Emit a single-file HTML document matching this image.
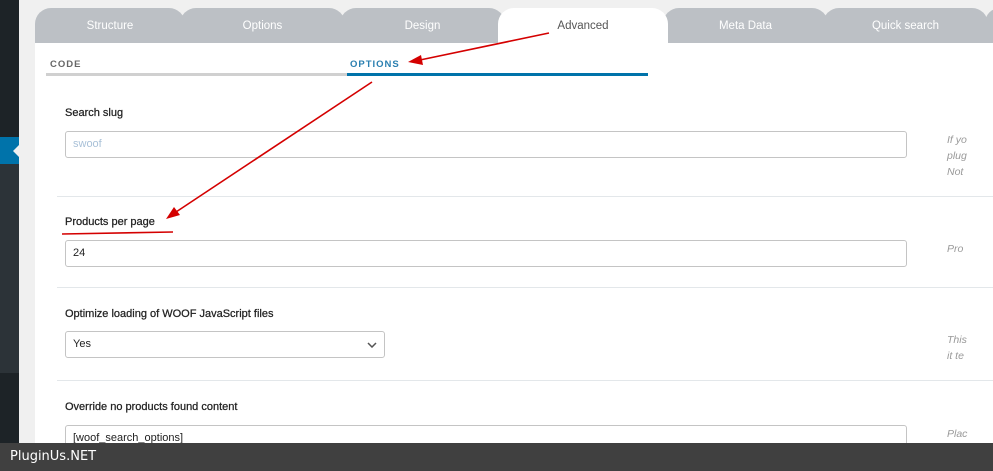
<!DOCTYPE html><html><head><style>
body{margin:0;width:993px;height:471px;overflow:hidden;background:#f0f0f0;font-family:"Liberation Sans",sans-serif;position:relative}
.a{position:absolute}
.lab{position:absolute;left:65px;font-size:11px;color:#222;letter-spacing:0px;-webkit-text-stroke:0.25px #222}
.inp{position:absolute;left:65px;width:833px;height:25px;border:1px solid #c4c4c4;border-radius:3px;background:#fff;font-size:11px;line-height:25px;padding-left:7px;box-sizing:content-box;color:#222}
.hr{position:absolute;left:57px;width:936px;height:1px;background:#e3e7ea}
.d{position:absolute;left:947px;font-size:10.5px;font-style:italic;color:#999;line-height:16px}
.tab{position:absolute;top:8px;height:35px;background:#bcc0c5;color:#fff;font-size:11.5px;text-align:center;line-height:36px;border-radius:16px 16px 0 0}
</style></head><body>
<div class="a" style="left:0;top:0;width:19px;height:137px;background:#1d2327"></div>
<div class="a" style="left:0;top:137px;width:19px;height:27px;background:#0073aa"></div>
<div class="a" style="left:13px;top:145px;width:0;height:0;border-top:6px solid transparent;border-bottom:6px solid transparent;border-right:6px solid #f0f0f0"></div>
<div class="a" style="left:0;top:164px;width:19px;height:209px;background:#2c3338"></div>
<div class="a" style="left:0;top:373px;width:19px;height:98px;background:#1d2327"></div>
<div class="a" style="left:35px;top:43px;width:958px;height:428px;background:#fff"></div>
<div class="tab" style="left:35px;width:150px">Structure</div>
<div class="tab" style="left:180px;width:165px">Options</div>
<div class="tab" style="left:340px;width:165px">Design</div>
<div class="tab" style="left:663px;width:165px">Meta Data</div>
<div class="tab" style="left:823px;width:165px">Quick search</div>
<div class="tab" style="left:985px;width:30px"></div>
<div class="tab" style="left:498px;width:170px;background:#fff;color:#555">Advanced</div>
<div class="a" style="left:50px;top:59px;font-size:9.5px;font-weight:bold;letter-spacing:1px;color:#666">CODE</div>
<div class="a" style="left:350px;top:59px;font-size:9.5px;font-weight:bold;letter-spacing:1px;color:#2a7fb0">OPTIONS</div>
<div class="a" style="left:46px;top:73px;width:301px;height:3px;background:#d0d0d0"></div>
<div class="a" style="left:347px;top:73px;width:301px;height:3px;background:#0073aa"></div>
<div class="lab" style="top:107px">Search slug</div>
<div class="inp" style="top:131px;color:#a9c1d8">swoof</div>
<div class="d" style="top:132px">If yo<br>plug<br>Not</div>
<div class="hr" style="top:196px"></div>
<div class="lab" style="top:216px">Products per page</div>
<div class="inp" style="top:240px">24</div>
<div class="d" style="top:241px">Pro</div>
<div class="hr" style="top:287px"></div>
<div class="lab" style="top:308px">Optimize loading of WOOF JavaScript files</div>
<div class="inp" style="top:331px;width:311px">Yes<svg style="position:absolute;right:7px;top:10px" width="10" height="6"><path d="M1 1L5 5L9 1" stroke="#555" stroke-width="1.5" fill="none"/></svg></div>
<div class="d" style="top:332px">This<br>it te</div>
<div class="hr" style="top:380px"></div>
<div class="lab" style="top:401px">Override no products found content</div>
<div class="inp" style="top:425px">[woof_search_options]</div>
<div class="d" style="top:426px">Plac</div>
<svg class="a" style="left:0;top:0" width="993" height="471">
<g stroke="#d40000" stroke-width="1.6" fill="#d40000">
<line x1="549" y1="33" x2="420" y2="60"/>
<polygon points="408,62 421,55 423,65" stroke="none"/>
<line x1="372" y1="82" x2="176" y2="212"/>
<polygon points="166,219 174,207 180,215" stroke="none"/>
<line x1="62" y1="234" x2="173" y2="232"/>
</g></svg>
<div class="a" style="left:0;top:443px;width:993px;height:28px;background:#404040;color:#fff;font-family:'DejaVu Sans',sans-serif;font-size:13px;line-height:28px;padding-left:10px;box-sizing:border-box">PluginUs.NET</div>
</body></html>
